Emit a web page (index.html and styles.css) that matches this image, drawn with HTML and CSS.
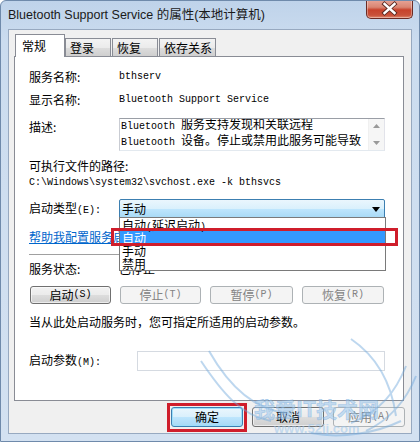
FILE: index.html
```html
<!DOCTYPE html>
<html>
<head>
<meta charset="utf-8">
<link rel="stylesheet" href="styles.css">
</head>
<body>
<div class="window">
  <div class="titlebar">
    <span class="title">Bluetooth Support Service 的属性(本地计算机)</span>
    <div class="close">
      <svg width="47" height="19" viewBox="0 0 47 19">
        <path d="M18.5 5 L28.5 14 M28.5 5 L18.5 14" stroke="#5a2a22" stroke-width="4.2" stroke-linecap="square"/>
        <path d="M18.5 5 L28.5 14 M28.5 5 L18.5 14" stroke="#fff" stroke-width="2.4" stroke-linecap="square"/>
      </svg>
    </div>
  </div>
  <div class="client">
    <div class="tabs">
      <div class="tab active">常规</div>
      <div class="tab t2">登录</div>
      <div class="tab t3">恢复</div>
      <div class="tab t4">依存关系</div>
    </div>
    <div class="panel">
      <div class="row r1"><span class="lbl">服务名称:</span><span class="mono">bthserv</span></div>
      <div class="row r2"><span class="lbl">显示名称:</span><span class="mono">Bluetooth Support Service</span></div>
      <div class="row r3">
        <span class="lbl lbl-top">描述:</span>
        <div class="textarea">
          <div class="ta-text"><span class="mono">Bluetooth </span>服务支持发现和关联远程<br><span class="mono">Bluetooth </span>设备。停止或禁用此服务可能导致</div>
          <div class="vscroll">
            <svg width="7" height="4" viewBox="0 0 7 4"><path d="M0 4 L3.5 0 L7 4Z" fill="#9a9a9a"/></svg>
            <svg width="7" height="4" viewBox="0 0 7 4"><path d="M0 0 L3.5 4 L7 0Z" fill="#9a9a9a"/></svg>
          </div>
        </div>
      </div>
      <div class="row r4">可执行文件的路径:</div>
      <div class="row r5"><span class="mono">C:\Windows\system32\svchost.exe -k bthsvcs</span></div>
      <div class="row r6">
        <span class="lbl">启动类型<span class="mono">(E):</span></span>
        <div class="combo"><span>手动</span>
          <svg width="8" height="5" viewBox="0 0 8 5"><path d="M0 0 L8 0 L4 5Z" fill="#000"/></svg>
        </div>
      </div>
      <div class="row link-row"><span class="link">帮助我配置服务启动选项。</span></div>
      <div class="sep"></div>
      <div class="row r7"><span class="lbl">服务状态:</span><span>已停止</span></div>
      <div class="svc-buttons">
        <div class="btn b1">启动<span class="mono">(S)</span></div>
        <div class="btn b2 disabled">停止<span class="mono">(T)</span></div>
        <div class="btn b3 disabled">暂停<span class="mono">(P)</span></div>
        <div class="btn b4 disabled">恢复<span class="mono">(R)</span></div>
      </div>
      <div class="row hint">当从此处启动服务时，您可指定所适用的启动参数。</div>
      <div class="row r8">
        <span class="lbl lbl-wide">启动参数<span class="mono">(M):</span></span>
        <div class="input"></div>
      </div>

      <div class="dropdown">
        <div class="item">自动<span class="mono">(</span>延迟启动<span class="mono">)</span></div>
        <div class="item selected">自动</div>
        <div class="item">手动</div>
        <div class="item">禁用</div>
      </div>
      <div class="redbox redbox-item"></div>
    </div>
    <div class="footer">
      <div class="btn-wrap">
        <div class="btn fbtn default">确定</div>
        <div class="redbox redbox-ok"></div>
      </div>
      <div class="btn fbtn">取消</div>
      <div class="btn fbtn disabled">应用<span class="mono">(A)</span></div>
    </div>
  </div>
  <svg class="watermark" width="230" height="122" viewBox="0 0 230 122">
    <g fill="none" stroke="#6fa8dc" stroke-width="2" opacity="0.45">
      <path d="M10 40 C 30 70, 50 95, 80 100"/>
      <path d="M18 30 C 35 60, 60 88, 95 92"/>
      <path d="M215 45 C 205 70, 190 90, 160 102"/>
      <path d="M225 55 C 215 80, 200 98, 175 110"/>
      <path d="M160 18 C 185 35, 200 60, 205 95"/>
      <path d="M120 112 C 150 118, 185 112, 210 100"/>
    </g>
    <text x="63" y="96" class="wm-big">我爱IT技术网</text>
    <text x="83" y="112" class="wm-small">www.52ij.com</text>
  </svg>
</div>
</body>
</html>
```

FILE: styles.css
```css
* { box-sizing: border-box; }

body {
  margin: 0;
  font-family: "Noto Sans CJK SC", sans-serif;
  font-size: 12px;
  color: #000;
}

.mono {
  font-family: "Liberation Mono", monospace;
  font-size: 10px;
}

.window {
  width: 420px;
  height: 442px;
  position: relative;
  overflow: hidden;
  display: flex;
  flex-direction: column;
  border: 1px solid #6f8aab;
  border-radius: 6px 6px 0 0;
  background: linear-gradient(180deg, #bfd3ea 0, #cbdcef 40px, #d3e1f1 100%);
}

.titlebar {
  height: 28px;
  display: flex;
  align-items: flex-start;
  flex: none;
}

.title {
  padding: 7px 0 0 7px;
  font-family: "Liberation Sans", "Noto Sans CJK SC", sans-serif;
  font-size: 12.5px;
  line-height: 15px;
  color: #1a1a1a;
}

.close {
  margin-left: auto;
  margin-right: 6px;
  margin-top: -1px;
  width: 47px;
  height: 19px;
  border: 1px solid #6b2b24;
  border-top: none;
  border-radius: 0 0 5px 5px;
  background: linear-gradient(180deg, #e8a597 0, #d98572 40%, #c7422b 55%, #c9523a 85%, #e08a6e 100%);
  box-shadow: inset 0 0 0 1px rgba(255,255,255,0.35);
}
.close svg { display: block; margin: -1px 0 0 -1px; }

.client {
  margin: 0 7px;
  height: 405px;
  flex: none;
  border: 1px solid #97a9c0;
  background: #f0f0f0;
  padding: 4px 7px 0 5px;
}

.tabs {
  display: flex;
  align-items: flex-end;
  height: 23px;
  margin-bottom: -1px;
  padding-left: 1px;
  position: relative;
  z-index: 1;
}

.tab {
  height: 18px;
  margin-bottom: 1px;
  border: 1px solid #898c95;
  border-bottom: none;
  background: linear-gradient(180deg, #f3f3f3 0, #ebebeb 50%, #dddddd 50%, #cfcfcf 100%);
  padding: 2px 0 0 4px;
  line-height: 14px;
}
.tab.active {
  height: 23px;
  margin-bottom: 0;
  width: 50px;
  background: #fff;
  padding: 4px 0 0 6px;
}
.tab.t2 { width: 46px; }
.tab.t3 { width: 46px; margin-left: 1px; }
.tab.t4 { width: 57px; margin-left: 1px; }

.panel {
  height: 345px;
  border: 1px solid #898c95;
  background: #fff;
  position: relative;
  padding: 12px 18px 0 14px;
}

.row {
  display: flex;
  align-items: center;
  line-height: 16px;
}
.lbl { width: 90px; flex: none; }
.lbl-wide { width: 108px; }
.lbl-top { padding-top: 1px; align-self: flex-start; }

.r2 { margin-top: 7px; }
.r3 { margin-top: 10px; align-items: flex-start; }
.r4 { margin-top: 7px; }
.r5 { margin-top: 1px; }
.r6 { margin-top: 8px; }
.link-row { margin-top: 10px; }
.r7 { margin-top: 6px; }
.hint { margin-top: 10px; }
.r8 { margin-top: 21px; }

.textarea {
  width: 266px;
  height: 33px;
  border: 1px solid;
  border-color: #9a9ea6 #e2e3ea #e3e9ef #c9ccd3;
  display: flex;
  overflow: hidden;
}
.ta-text {
  flex: 1;
  line-height: 13px;
  margin-top: -2px;
  padding-left: 1px;
  white-space: nowrap;
  overflow: hidden;
}
.vscroll {
  width: 16px;
  flex: none;
  background: #f6f6f6;
  border-left: 1px solid #f0f0f0;
  display: flex;
  flex-direction: column;
  justify-content: space-between;
  align-items: center;
  padding: 5px 0 5px;
}
.vscroll svg { display: block; }

.combo {
  width: 267px;
  height: 20px;
  border: 1px solid #3c7fb1;
  border-radius: 2px;
  background: linear-gradient(180deg, #eaf6fd 0, #d9f0fc 50%, #bee6fd 50%, #a7d9f5 100%);
  display: flex;
  align-items: center;
  justify-content: space-between;
  padding: 0 4px 0 2px;
}
.combo svg { display: block; }

.link {
  color: #0066cc;
  text-decoration: underline;
}

.sep {
  margin-top: 9px;
  height: 1px;
  background: #a0a0a0;
}

.svc-buttons {
  display: flex;
  gap: 9px;
  margin-top: 9px;
  padding-left: 1px;
}

.btn {
  height: 18px;
  border: 1px solid #707070;
  border-radius: 3px;
  background: linear-gradient(180deg, #f2f2f2 0, #ebebeb 50%, #dddddd 50%, #cfcfcf 100%);
  display: flex;
  align-items: center;
  justify-content: center;
  line-height: 16px;
  box-shadow: inset 0 0 0 1px rgba(255,255,255,0.6);
}
.btn.disabled {
  border-color: #adb2b5;
  background: #f4f4f4;
  color: #838383;
  box-shadow: none;
}
.b1, .b2 { width: 81px; }
.b3 { width: 83px; }
.b4 { width: 82px; }

.input {
  width: 248px;
  height: 20px;
  border: 1px solid #d5dae1;
  background: #fff;
}

.dropdown {
  position: absolute;
  left: 104px;
  top: 160px;
  width: 267px;
  height: 54px;
  border: 1px solid #7a7a7a;
  background: #fff;
  z-index: 3;
}
.item {
  height: 13px;
  line-height: 13px;
  padding-left: 2px;
  white-space: nowrap;
}
.item.selected {
  background: #3399ff;
  color: #fff;
}

.redbox {
  position: absolute;
  border: 3px solid #cf1d2b;
  z-index: 4;
}
.redbox-item {
  left: 96px;
  top: 171px;
  width: 287px;
  height: 18px;
}

.footer {
  display: flex;
  justify-content: flex-end;
  gap: 9px;
  margin-top: 6px;
  margin-right: -1px;
}
.fbtn {
  width: 72px;
  height: 20px;
}
.btn.default {
  border-color: #3c7fb1;
  background: linear-gradient(180deg, #eaf6fd 0, #d9f0fc 50%, #bee6fd 50%, #a7d9f5 100%);
  box-shadow: inset 0 0 0 1px #9ee0fb;
}
.btn-wrap { position: relative; }
.redbox-ok {
  left: -4px;
  top: -4px;
  right: -4px;
  bottom: -5px;
}

.watermark {
  position: absolute;
  left: 190px;
  top: 320px;
  pointer-events: none;
  z-index: 5;
}
.wm-big {
  font-family: "Noto Sans CJK SC", sans-serif;
  font-size: 21px;
  font-weight: 700;
  fill: #9cc7ee;
  fill-opacity: 0.55;
  stroke: #6fa8dc;
  stroke-opacity: 0.5;
  stroke-width: 0.6;
}
.wm-small {
  font-family: "Liberation Sans", sans-serif;
  font-size: 13px;
  font-weight: 700;
  fill: #9cc7ee;
  fill-opacity: 0.55;
}
```
